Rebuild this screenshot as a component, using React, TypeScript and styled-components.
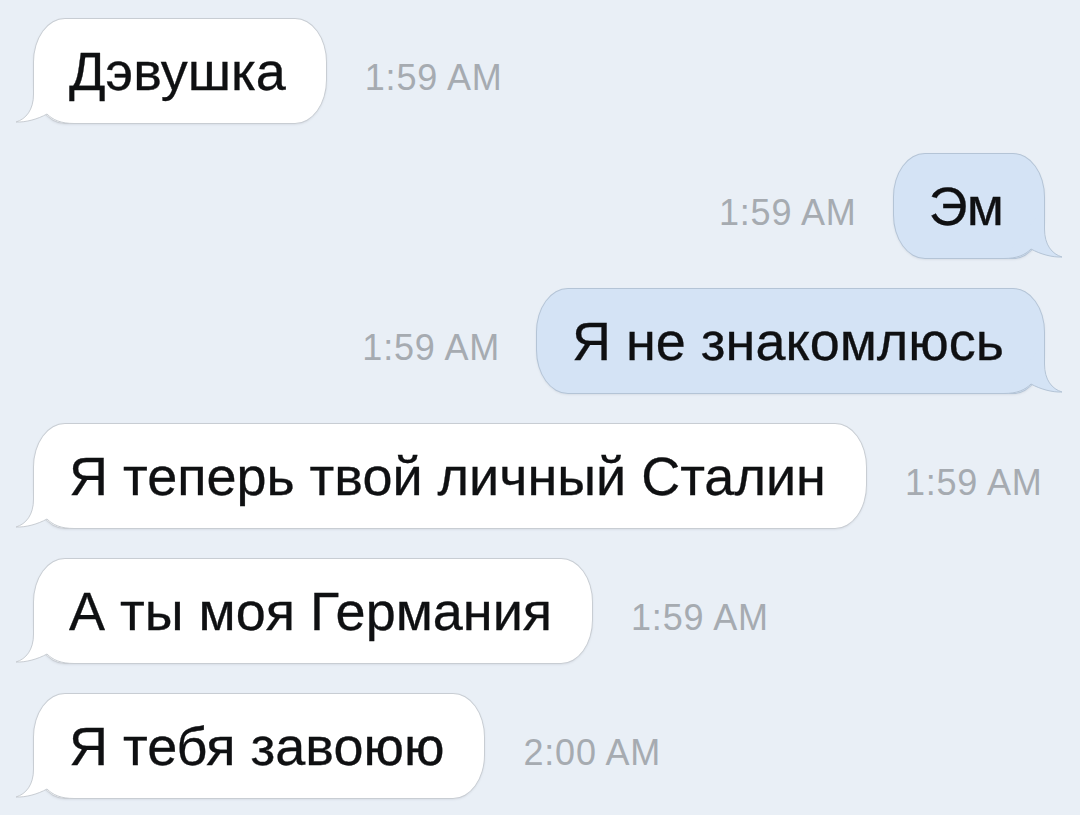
import React from "react";
import styled, { createGlobalStyle } from "styled-components";

const GlobalStyle = createGlobalStyle`
  html, body {
    margin: 0;
    padding: 0;
    background: #e9eff6;
  }
  body {
    width: 1080px;
    height: 815px;
    overflow: hidden;
    font-family: "Liberation Sans", Arial, Helvetica, sans-serif;
  }
`;

const Chat = styled.div`
  display: flex;
  flex-direction: column;
  gap: 29px;
  padding: 18px 35px 0 33px;
  box-sizing: border-box;
  width: 1080px;
  height: 815px;
  background: #e9eff6;
`;

const Row = styled.div<{ $out?: boolean }>`
  display: flex;
  align-items: baseline;
  justify-content: flex-start;
  flex-direction: ${(p) => (p.$out ? "row-reverse" : "row")};
  gap: ${(p) => (p.$out ? "36px" : "38px")};
  height: 106px;
`;

const Bubble = styled.div<{ $out?: boolean }>`
  position: relative;
  box-sizing: border-box;
  height: 106px;
  display: flex;
  align-items: center;
  padding: 0 40px 0 35px;
  border-radius: 32px / 44px;
  border: 1px solid ${(p) => (p.$out ? "#b4c4d6" : "#c8cdd3")};
  background: ${(p) => (p.$out ? "#d4e3f5" : "#ffffff")};
  color: #0f1012;
  font-size: 54px;
  letter-spacing: 0;
  -webkit-text-stroke: 0.3px #0f1012;
  white-space: nowrap;
  box-shadow: 0 1px 2px rgba(120, 130, 145, 0.14);
`;

const Time = styled.span`
  font-size: 36px;
  letter-spacing: 0.8px;
  color: #a6abb1;
  white-space: nowrap;
`;

const TailSvg = styled.svg<{ $out?: boolean }>`
  position: absolute;
  bottom: -1px;
  ${(p) => (p.$out ? "right: -20px; transform: scaleX(-1);" : "left: -20px;")}
  width: 60px;
  height: 50px;
  overflow: visible;
`;

const Tail: React.FC<{ out?: boolean }> = ({ out }) => {
  const fill = out ? "#d4e3f5" : "#ffffff";
  const stroke = out ? "#b4c4d6" : "#c8cdd3";
  const outer =
    "C19.5,36 12,45 2,48 C12,48.5 24,45 33,40 C39,46 47,49.5 60,49.5";
  return (
    <TailSvg $out={out} viewBox="0 0 60 50">
      <path d={`M20,0 L20,20 ${outer} L60,48 L20,0 Z`} fill={fill} />
      <path
        d={`M19.5,0 L19.5,20 ${outer}`}
        fill="none"
        stroke={stroke}
        strokeWidth={1}
      />
    </TailSvg>
  );
};

type Msg = { text: string; time: string; out?: boolean };

const messages: Msg[] = [
  { text: "Дэвушка", time: "1:59 AM" },
  { text: "Эм", time: "1:59 AM", out: true },
  { text: "Я не знакомлюсь", time: "1:59 AM", out: true },
  { text: "Я теперь твой личный Сталин", time: "1:59 AM" },
  { text: "А ты моя Германия", time: "1:59 AM" },
  { text: "Я тебя завоюю", time: "2:00 AM" },
];

export default function App() {
  return (
    <>
      <GlobalStyle />
      <Chat>
        {messages.map((m, i) => (
          <Row key={i} $out={m.out}>
            <Bubble $out={m.out}>
              <Tail out={m.out} />
              {m.text}
            </Bubble>
            <Time>{m.time}</Time>
          </Row>
        ))}
      </Chat>
    </>
  );
}
